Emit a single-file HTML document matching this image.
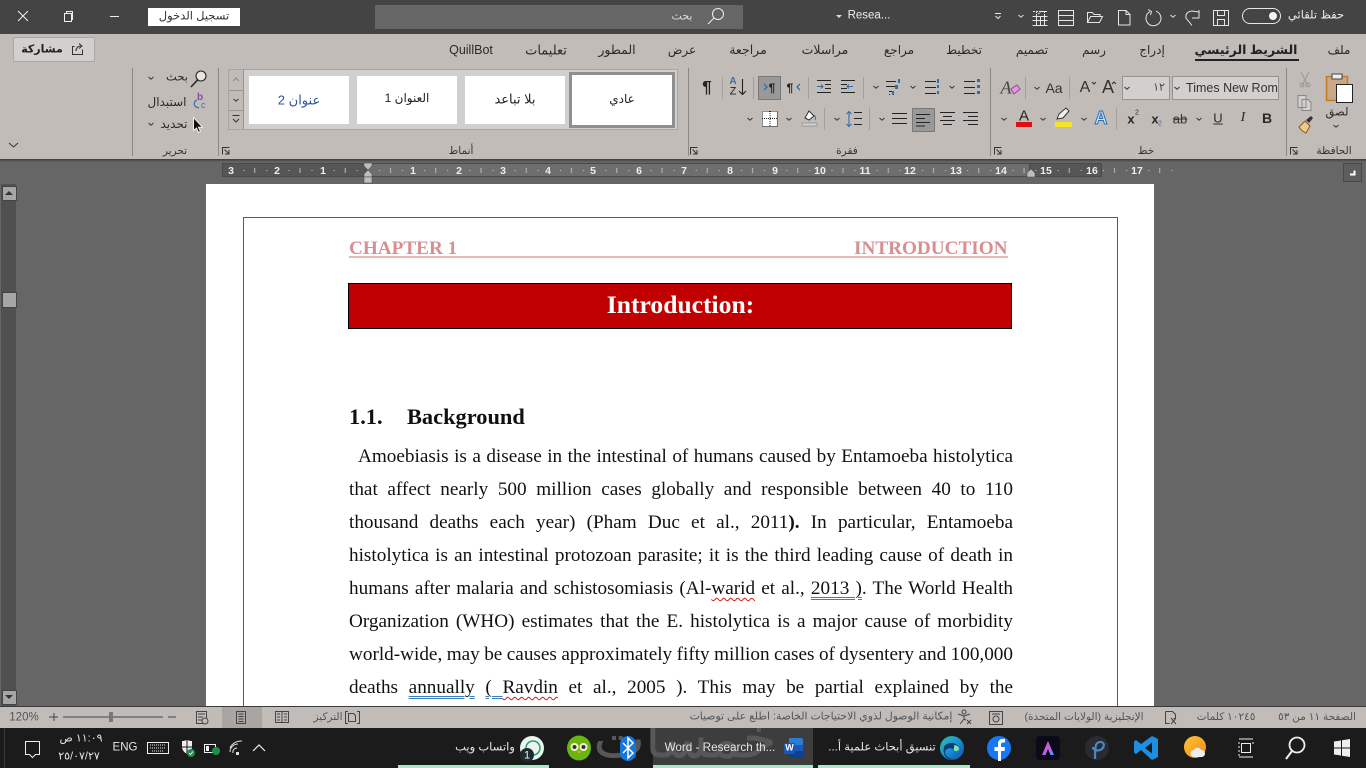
<!DOCTYPE html>
<html lang="ar"><head><meta charset="utf-8"><title>Word</title>
<style>
html,body{margin:0;padding:0;width:1366px;height:768px;overflow:hidden;background:#666}
body{position:relative;font-family:"Liberation Sans","DejaVu Sans",sans-serif;color:#222}
div,span.a{position:absolute}
.t{position:absolute;white-space:nowrap;transform:translate(-50%,-50%);line-height:1;font-size:11.5px;color:#2a2a2a}
.w{color:#eee}
.s{color:#555;font-size:10.5px}
.g{font-size:10.5px;color:#333}
.tb{font-size:11.5px;color:#e6e6e6}
.p{left:349px;width:664px;height:33px;line-height:33px;font:19.2px/33px "Liberation Serif",serif;color:#111;text-align:justify;text-align-last:justify;white-space:nowrap}
.b{text-decoration:underline double #3a7fc0 1px;text-underline-offset:3px}
.r{text-decoration:underline wavy #d01818 1px;text-underline-offset:3px}
.sep{width:1px;background:#a3a09c}
.gs{width:1px;background:#8c8985}
.st{background:#fff;top:76px;width:100px;height:48px}
svg{position:absolute;left:0;top:0}
</style></head><body>

<div style="left:0;top:0;width:1366px;height:34px;background:#444"></div>
<div style="left:0;top:34px;width:1366px;height:125px;background:#c1bcb8"></div>
<div style="left:0;top:159px;width:1366px;height:3px;background:linear-gradient(#3c3c3c,#666)"></div>

<div style="left:148px;top:8px;width:92px;height:18px;background:#fff"></div>
<span class="t" dir="rtl" style="left:194px;top:17px;color:#333;font-size:11.5px">تسجيل الدخول</span>
<div style="left:375px;top:5px;width:368px;height:24px;background:#666"></div>
<span class="t w" dir="rtl" style="left:682px;top:17px;font-size:11px;color:#ddd">بحث</span>
<span class="t w" style="left:869px;top:16px;font-size:11.5px;color:#eee">Resea...</span>
<span class="t w" dir="rtl" style="left:1316px;top:16px;font-size:11.5px">حفظ تلقائي</span>

<span class="t" dir="rtl" style="left:1339px;top:50px;font-size:12px">ملف</span>
<span class="t" dir="rtl" style="left:1246px;top:50px;font-size:12.5px;font-weight:bold;color:#222">الشريط الرئيسي</span>
<div style="left:1195px;top:59px;width:104px;height:2px;background:#222"></div>
<span class="t" dir="rtl" style="left:1152px;top:50px;font-size:12px">إدراج</span>
<span class="t" dir="rtl" style="left:1094px;top:50px;font-size:12px">رسم</span>
<span class="t" dir="rtl" style="left:1032px;top:50px;font-size:12px">تصميم</span>
<span class="t" dir="rtl" style="left:964px;top:50px;font-size:12px">تخطيط</span>
<span class="t" dir="rtl" style="left:899px;top:50px;font-size:12px">مراجع</span>
<span class="t" dir="rtl" style="left:825px;top:50px;font-size:12.5px">مراسلات</span>
<span class="t" dir="rtl" style="left:748px;top:50px;font-size:12.5px">مراجعة</span>
<span class="t" dir="rtl" style="left:682px;top:50px;font-size:12px">عرض</span>
<span class="t" dir="rtl" style="left:617px;top:50px;font-size:12.5px">المطور</span>
<span class="t" dir="rtl" style="left:546px;top:50px;font-size:13px">تعليمات</span>
<span class="t" style="left:471px;top:50px;font-size:12.5px">QuillBot</span>

<div style="left:13px;top:37px;width:80px;height:23px;background:#d3cfcc;border:1px solid #aaa6a2;border-radius:2px"></div>
<span class="t" dir="rtl" style="left:42px;top:50px;font-size:11px;font-weight:bold;color:#222">مشاركة</span>

<div class="gs" style="left:132px;top:68px;height:88px"></div>
<div class="gs" style="left:218px;top:68px;height:88px"></div>
<div class="gs" style="left:688px;top:68px;height:88px"></div>
<div class="gs" style="left:990px;top:68px;height:88px"></div>
<div class="gs" style="left:1286px;top:68px;height:88px"></div>

<span class="t g" dir="rtl" style="left:175px;top:151px">تحرير</span>
<span class="t g" dir="rtl" style="left:461px;top:151px">أنماط</span>
<span class="t g" dir="rtl" style="left:847px;top:151px">فقرة</span>
<span class="t g" dir="rtl" style="left:1146px;top:151px">خط</span>
<span class="t g" dir="rtl" style="left:1334px;top:151px">الحافظة</span>

<span class="t" dir="rtl" style="left:177px;top:78px;font-size:11.5px">بحث</span>
<span class="t" dir="rtl" style="left:167px;top:102px;font-size:12px">استبدال</span>
<span class="t" dir="rtl" style="left:174px;top:124px;font-size:12px">تحديد</span>

<div style="left:229px;top:70px;width:448px;height:59px;background:#d0cfce;outline:1px solid #a8a5a2"></div>
<div style="left:229px;top:70px;width:14px;height:59px;background:#c1bcb8"></div>
<div style="left:243px;top:70px;width:1px;height:59px;background:#98958f"></div>
<div style="left:229px;top:90px;width:14px;height:1px;background:#98958f"></div>
<div style="left:229px;top:110px;width:14px;height:1px;background:#98958f"></div>
<div class="st" style="left:249px"></div>
<div class="st" style="left:357px"></div>
<div class="st" style="left:465px"></div>
<div style="left:569px;top:72px;width:100px;height:50px;background:#fff;border:3px solid #8f8f8f"></div>
<span class="t" dir="rtl" style="left:299px;top:100px;font-size:13px;color:#2f5496">عنوان 2</span>
<span class="t" dir="rtl" style="left:407px;top:98px;font-size:12px;color:#222">العنوان 1</span>
<span class="t" dir="rtl" style="left:515px;top:99px;font-size:13px;color:#222">بلا تباعد</span>
<span class="t" dir="rtl" style="left:622px;top:99px;font-size:12px;color:#222">عادي</span>

<div style="left:758px;top:76px;width:21px;height:22px;background:#999;border:1px solid #777"></div>
<div style="left:912px;top:108px;width:21px;height:22px;background:#999;border:1px solid #777"></div>
<div class="sep" style="left:722px;top:77px;height:22px"></div>
<div class="sep" style="left:753px;top:77px;height:22px"></div>
<div class="sep" style="left:808px;top:77px;height:22px"></div>
<div class="sep" style="left:863px;top:77px;height:22px"></div>
<div class="sep" style="left:824px;top:108px;height:22px"></div>
<div class="sep" style="left:869px;top:108px;height:22px"></div>
<div class="sep" style="left:1025px;top:77px;height:22px"></div>
<div class="sep" style="left:1069px;top:77px;height:22px"></div>
<div class="sep" style="left:1116px;top:108px;height:22px"></div>

<span class="t" style="left:707px;top:87px;font-size:17px;font-weight:bold;color:#222">¶</span>
<span class="t" style="left:772px;top:88px;font-size:12px;font-weight:bold;color:#222">¶</span>
<span class="t" style="left:790px;top:88px;font-size:12px;font-weight:bold;color:#222">¶</span>

<div style="left:1172px;top:76px;width:105px;height:22px;background:#d2cfcc;border:1px solid #96938f"></div>
<div style="left:1122px;top:76px;width:46px;height:22px;background:#d2cfcc;border:1px solid #96938f"></div>
<span class="t" style="left:1232px;top:88px;font-size:12.5px;color:#333">Times New Rom</span>
<span class="t" style="left:1159px;top:88px;font-size:11px;color:#444">١٢</span>

<span class="t" style="left:1267px;top:118px;font-size:14px;font-weight:bold">B</span>
<span class="t" style="left:1243px;top:118px;font:italic 14px 'Liberation Serif',serif">I</span>
<span class="t" style="left:1218px;top:118px;font-size:13px;text-decoration:underline">U</span>
<span class="t" style="left:1180px;top:119px;font-size:13px;color:#333;text-decoration:line-through">ab</span>
<span class="t" style="left:1155px;top:119px;font-size:13px;font-weight:bold">x</span>
<span class="t" style="left:1160px;top:124px;font-size:7px;color:#2f6fb0">2</span>
<span class="t" style="left:1131px;top:119px;font-size:13px;font-weight:bold">x</span>
<span class="t" style="left:1137px;top:113px;font-size:7px">2</span>
<span class="t" style="left:1054px;top:88px;font-size:14px;color:#333">Aa</span>
<span class="t" style="left:1085px;top:88px;font-size:16px;color:#333">A</span>
<span class="t" style="left:1108px;top:87px;font-size:18px;color:#333">A</span>
<span class="t" style="left:1006px;top:88px;font:italic 18px 'Liberation Serif',serif;color:#444">A</span>
<span class="t" style="left:1024px;top:116px;font-size:15px;color:#222">A</span>
<span class="t" style="left:1101px;top:118px;font-size:18px;font-weight:bold;color:#cfe2f5;-webkit-text-stroke:1px #2f6fb0">A</span>
<span class="t" dir="rtl" style="left:1337px;top:113px;font-size:11.5px">لصق</span>
<span class="t" style="left:733px;top:82px;font-size:10px;font-weight:bold;color:#3e6fa8">A</span>
<span class="t" style="left:733px;top:92px;font-size:11px;color:#222">Z</span>

<!-- ruler -->
<div style="left:223px;top:164px;width:145px;height:12px;background:#565656;outline:1px solid #4a4a4a"></div>
<div style="left:368px;top:164px;width:662px;height:12px;background:#6e6e6e;outline:1px solid #4a4a4a"></div>
<div style="left:1030px;top:164px;width:71px;height:12px;background:#565656;outline:1px solid #4a4a4a"></div>

<!-- page -->
<div style="left:206px;top:184px;width:948px;height:522px;background:#fff;overflow:hidden"></div>
<div style="left:243px;top:217px;width:873px;height:489px;border:1px solid #b8303f;border-bottom:0"></div>
<div style="left:349px;top:238px;font:bold 19.2px/22px 'Liberation Serif',serif;color:#d88f8f;white-space:nowrap">CHAPTER 1</div>
<div style="left:854px;top:238px;font:bold 19.2px/22px 'Liberation Serif',serif;color:#d88f8f;white-space:nowrap">INTRODUCTION</div>
<div style="left:349px;top:256px;width:659px;height:2px;background:#ebb9b9"></div>
<div style="left:348px;top:283px;width:662px;height:44px;background:#c00000;border:1px solid #000"></div>
<div style="left:349px;top:290px;width:663px;text-align:center;font:bold 25.6px/30px 'Liberation Serif',serif;color:#fff">Introduction:</div>
<div style="left:349px;top:403px;font:bold 22.4px/28px 'Liberation Serif',serif;color:#111;white-space:nowrap">1.1.</div>
<div style="left:407px;top:403px;font:bold 22.4px/28px 'Liberation Serif',serif;color:#111;white-space:nowrap">Background</div>

<div class="p" style="top:440px;left:358px;width:655px">Amoebiasis is a disease in the intestinal of humans caused by Entamoeba histolytica</div>
<div class="p" style="top:473px">that affect nearly 500 million cases globally and responsible between 40 to 110</div>
<div class="p" style="top:506px">thousand deaths each year) (Pham Duc et al., 2011<b>).</b> In particular, Entamoeba</div>
<div class="p" style="top:539px">histolytica is an intestinal protozoan parasite; it is the third leading cause of death in</div>
<div class="p" style="top:572px">humans after malaria and schistosomiasis (Al-<span class="r">warid</span> et al., <span class="b">2013 )</span>. The World Health</div>
<div class="p" style="top:605px">Organization (WHO) estimates that the E. histolytica is a major cause of morbidity</div>
<div class="p" style="top:638px;word-spacing:-0.5px">world-wide, may be causes approximately fifty million cases of dysentery and 100,000</div>
<div class="p" style="top:671px">deaths <span class="b">annually</span> <span class="b">( </span><span class="r">Ravdin</span> et al., 2005 ). This may be partial explained by the</div>

<!-- scrollbar -->
<div style="left:1px;top:184px;width:15px;height:522px;background:#505050"></div>
<div style="left:2px;top:186px;width:13px;height:13px;background:#a6a6a6;border:1px solid #444"></div>
<div style="left:2px;top:292px;width:13px;height:14px;background:#a6a6a6;border:1px solid #444"></div>
<div style="left:2px;top:690px;width:13px;height:13px;background:#a6a6a6;border:1px solid #444"></div>

<!-- status -->
<div style="left:0;top:706px;width:1366px;height:1px;background:#3a3a3a"></div>
<div style="left:0;top:707px;width:1366px;height:21px;background:#c1bcb8"></div>
<div style="left:222px;top:707px;width:40px;height:21px;background:#a9a5a1"></div>
<span class="t s" style="left:24px;top:718px;font-size:11.5px">120%</span>
<span class="t s" dir="rtl" style="left:1317px;top:717px">الصفحة ١١ من ٥٣</span>
<span class="t s" dir="rtl" style="left:1226px;top:717px">١٠٢٤٥ كلمات</span>
<span class="t s" dir="rtl" style="left:1084px;top:717px">الإنجليزية (الولايات المتحدة)</span>
<span class="t s" dir="rtl" style="left:821px;top:717px;font-size:10.8px">إمكانية الوصول لذوي الاحتياجات الخاصة: اطلع على توصيات</span>
<span class="t s" dir="rtl" style="left:328px;top:717px">التركيز</span>

<!-- taskbar -->
<div style="left:0;top:728px;width:1366px;height:40px;background:#1b1b1b"></div>
<div style="left:653px;top:728px;width:160px;height:40px;background:#3d3d3d"></div>
<div style="left:590px;top:728px;width:190px;height:40px;overflow:hidden"><span class="t" dir="rtl" style="left:95px;top:11px;font-size:55px;color:#575757">خمسات</span></div>
<div style="left:398px;top:765px;width:151px;height:3px;background:#a6e8c8"></div>
<div style="left:653px;top:765px;width:160px;height:3px;background:#a6e8c8"></div>
<div style="left:818px;top:765px;width:152px;height:3px;background:#a6e8c8"></div>
<span class="t tb" dir="rtl" style="left:882px;top:748px">تنسيق أبحاث علمية أ...</span>
<span class="t tb" style="left:720px;top:748px;font-size:11.7px">Word - Research th...</span>
<span class="t tb" dir="rtl" style="left:485px;top:748px">واتساب ويب</span>
<span class="t tb" style="left:125px;top:748px;font-size:11.5px">ENG</span>
<span class="t tb" dir="rtl" style="left:81px;top:739px;font-size:11px">١١:٠٩ ص</span>
<span class="t tb" style="left:79px;top:757px;font-size:11px;direction:ltr;unicode-bidi:bidi-override">٢٥/٠٧/٢٧</span>
<span class="t" style="left:789.5px;top:748px;font-size:9px;font-weight:bold;color:#fff;z-index:3">W</span>
<span class="t tb" style="left:527px;top:756px;font-size:11px;color:#eee;z-index:3">1</span>

<svg width="1366" height="768" viewBox="0 0 1366 768" fill="none">
<defs>
<path id="c" d="M-2.5-1 0 1.2 2.5-1" stroke="#333" stroke-width="1"/>
<path id="cw" d="M-2.5-1 0 1.2 2.5-1" stroke="#ddd" stroke-width="1"/>
<pattern id="rt" x="368" y="164" width="45.25" height="12" patternUnits="userSpaceOnUse">
<rect x="11" y="6" width="1" height="1" fill="#ccc"/><rect x="22" y="4" width="1" height="5" fill="#bbb"/><rect x="34" y="6" width="1" height="1" fill="#ccc"/>
</pattern>
<linearGradient id="ed" x1="0" y1="0" x2="1" y2="1"><stop offset="0" stop-color="#35c1a0"/><stop offset=".5" stop-color="#1a8fd8"/><stop offset="1" stop-color="#0c4fa8"/></linearGradient>
<linearGradient id="wx" x1="0" y1="0" x2="1" y2="1"><stop offset="0" stop-color="#ffc531"/><stop offset="1" stop-color="#f08a1d"/></linearGradient>
<linearGradient id="ad" x1="0" y1="0" x2="1" y2="1"><stop offset="0" stop-color="#ff5b5b"/><stop offset=".5" stop-color="#c55be8"/><stop offset="1" stop-color="#4d9bff"/></linearGradient>
</defs>

<!-- window controls -->
<g stroke="#eee" stroke-width="1">
<path d="M18 11 28 21M28 11 18 21"/>
<path d="M64.500 13.500h7v8h-7zM66.500 13.500v-2h6v8h-1"/>
<path d="M110 16.500h9"/>
<circle cx="718" cy="14" r="5.500"/><path d="M714 18 708 24"/>
</g>
<path d="M836 15h6l-3 3z" fill="#ddd"/>

<!-- QAT -->
<g stroke="#e6e6e6" stroke-width="1">
<path d="M995 13.500h6M995.500 16l2.500 2.500 2.500-2.500"/>
<path d="M1032.500 16.500h15M1032.500 20.500h15M1032.500 25.500h15M1036.500 16.500v9M1040.500 16.500v9M1044.500 16.500v9"/>
<path d="M1033 11.500h14M1036.500 11v5M1044.500 11v5M1038 14l4-3" stroke-dasharray="2 1"/>
<path d="M1058.500 10.500h15v15h-15zM1058.500 15.500h15M1058.500 20.500h15"/>
<path d="M1087.500 22.500v-10h5l1.500 2h6v2M1087.500 22.500h12l3-6h-12z"/>
<path d="M1118.500 10.500h7.500l4 4v10.500h-11.500zM1126 10.500v4h4"/>
<path d="M1150 11.600A7.500 7.500 0 1 0 1156 11.200M1148 9.500l3.500 2-1 3.500"/>
<path d="M1192 25.500 1186 18Q1185 12 1192 11L1199 12M1199 10V18H1192"/>
<path d="M1213.500 10.500h15v15h-15zM1217.500 10.500v5h7v-5M1217.500 25.500v-6h7v6"/>
<rect x="1242.500" y="8.500" width="38" height="15" rx="7.500"/>
</g>
<use href="#cw" x="1021" y="16"/><use href="#cw" x="1173" y="16"/>
<circle cx="1273" cy="16" r="4" fill="#f4f4f4"/>

<!-- share icon -->
<g stroke="#333" stroke-width="1"><path d="M74.500 46.500h-2v8h10v-5M76 51c0-3 2-5 5-5M79 43.500l3 2.500-3 2.500"/></g>

<!-- editing group -->
<g stroke="#222" stroke-width="1.100">
<circle cx="201" cy="76" r="5" fill="#e8e6e4"/><path d="M197.500 80 191 87" stroke-width="1.500"/>
</g>
<use href="#c" x="151" y="78"/><use href="#c" x="151" y="124"/>
<text x="197" y="100" font-family="Liberation Sans" font-size="10" font-weight="bold" fill="#8a4aa8">b</text>
<text x="201" y="108" font-family="Liberation Sans" font-size="9" fill="#3e6fa8">c</text>
<path d="M197 100a4 4 0 0 0-1 7l3 1" stroke="#3e6fa8" stroke-width="1.200"/>
<path d="M193.500 117.500v13l3-2.500 2 4.500 2-1-2-4.300h4z" fill="#111" stroke="#eee" stroke-width="1"/>
<path d="M9 143l4.500 4 4.500-4" stroke="#333"/>

<!-- launchers -->
<g stroke="#333" stroke-width="1">
<path d="M222.500 154.500v-7h7M224.500 149.500l4 4M229 150v4h-4"/>
<path d="M690.500 154.500v-7h7M692.500 149.500l4 4M697 150v4h-4"/>
<path d="M994.500 154.500v-7h7M996.500 149.500l4 4M1001 150v4h-4"/>
<path d="M1290.500 154.500v-7h7M1292.500 149.500l4 4M1297 150v4h-4"/>
</g>

<!-- gallery scroll -->
<path d="M233 81l3-3 3 3" stroke="#888"/>
<use href="#c" x="236" y="100"/>
<path d="M232.500 115.500h7M233 119l3 3 3-3" stroke="#333"/>

<!-- paragraph row 1 -->
<path d="M742.500 79v15M739 91l3.500 3.500 3.500-3.500" stroke="#222" stroke-width="1.100"/>
<path d="M764 84l3 3-3 3" stroke="#2f6fb0" stroke-width="1.300"/>
<path d="M800 84l-3 3 3 3" stroke="#2f6fb0" stroke-width="1.300"/>
<g stroke="#222" stroke-width="1">
<path d="M817 80.500h14M825 84.500h6M825 88.500h6M817 92.500h14"/>
<path d="M841 80.500h14M841 84.500h6M841 88.500h6M841 92.500h14"/>
<path d="M886 81.500h10M886 86.500h10M889 91.500h5M889 94.500h1"/>
<path d="M925 81.500h11M925 87.500h11M925 93.500h11"/>
<path d="M964 81.500h11M964 87.500h11M964 93.500h11"/>
<path d="M892 113.500h15M892 118.500h15M892 123.500h15"/>
<path d="M916 114.500h14M916 118.500h9M916 122.500h14M916 126h9"/>
<path d="M940 112.500h15M943 116.500h9M940 120.500h15M943 124.500h9"/>
<path d="M963 112.500h15M968 116.500h10M963 120.500h15M968 124.500h10"/>
<path d="M854 112.500h8M854 118.500h8M854 124.500h8"/>
</g>
<path d="M817 86.500h6m-2-2 2 2-2 2M853 86.500h-6m2-2-2 2 2 2" stroke="#2f6fb0"/>
<path d="M849 112v14M846.500 114l2.500-2.500 2.500 2.500M846.500 124l2.500 2.500 2.500-2.500" stroke="#2f6fb0" stroke-width="1.100"/>
<g fill="#2f6fb0"><rect x="977" y="79" width="3" height="3"/><rect x="977" y="85" width="3" height="3"/><rect x="977" y="91" width="3" height="3"/>
<rect x="898" y="79" width="2" height="4"/><rect x="937" y="79" width="2" height="4"/><rect x="937" y="85" width="2" height="3"/><rect x="937" y="91" width="2" height="3"/><rect x="895" y="85" width="3" height="4"/><rect x="892" y="91" width="2" height="4"/></g>
<use href="#c" x="876" y="87"/><use href="#c" x="913" y="87"/><use href="#c" x="952" y="87"/>
<use href="#c" x="750" y="119"/><use href="#c" x="789" y="119"/><use href="#c" x="837" y="119"/><use href="#c" x="882" y="119"/>
<rect x="762" y="111" width="15" height="15" fill="#fff"/>
<path d="M762.500 111.500h15v15h-15zM770 111v15M762 118.500h15" stroke="#222" stroke-dasharray="1 1"/>
<path d="M805 118l4-7 5 5-5 4z" fill="#fff" stroke="#333"/><path d="M814 115c2 2 2 4 1 5" stroke="#2f6fb0"/>
<rect x="802" y="123" width="15" height="3" fill="#d8d4d0" stroke="#999"/>

<!-- font -->
<use href="#c" x="1037" y="88"/><use href="#c" x="1127" y="88"/><use href="#c" x="1177" y="88"/>
<use href="#c" x="1199" y="119"/><use href="#c" x="1084" y="119"/><use href="#c" x="1043" y="119"/><use href="#c" x="1004" y="119"/>
<path d="M1092 82l2 2 2-2M1112 84l2-2 2 2" stroke="#333"/>
<path d="M1011 89l6-4 3 4-6 5z" fill="#e89ad0" stroke="#8a4aa8"/>
<rect x="1016" y="122" width="16" height="5" fill="#e01010"/>
<rect x="1055" y="122" width="17" height="5" fill="#f4e623"/>
<path d="M1057 119l2-5 7-6 3 3-6 7z" fill="#eee" stroke="#333"/>

<!-- clipboard -->
<path d="M1301 72l7 14M1309 72l-7 14" stroke="#999" stroke-width="1"/><circle cx="1302" cy="85" r="2" stroke="#999"/><circle cx="1308" cy="85" r="2" stroke="#999"/>
<path d="M1298 95.500h8v12h-8zM1302 99.500h6l3 3v8h-9z" stroke="#888" fill="#d2cfcc"/>
<path d="M1299 127l6-6 5 5-4 7c-3-1-5-3-7-6z" fill="#f0c98a" stroke="#8a5a20"/><path d="M1306 120l5-4 2 2-4 5" fill="#333"/>
<rect x="1326.500" y="76.500" width="21" height="24" fill="#c7a888" stroke="#c77a24" stroke-width="1.500"/>
<rect x="1332" y="74" width="10" height="5" fill="#eee" stroke="#444"/>
<rect x="1336.500" y="84.500" width="16" height="18" fill="#fff" stroke="#222"/>
<use href="#c" x="1336" y="126"/>

<!-- ruler -->
<rect x="223" y="164" width="960" height="12" fill="url(#rt)"/>
<g font-family="Liberation Sans" font-size="10.500" font-weight="bold" fill="#eee" text-anchor="middle">
<text x="231" y="174">3</text><text x="277" y="174">2</text><text x="323" y="174">1</text>
<text x="413" y="174">1</text><text x="459" y="174">2</text><text x="503" y="174">3</text><text x="548" y="174">4</text><text x="593" y="174">5</text><text x="639" y="174">6</text><text x="684" y="174">7</text><text x="730" y="174">8</text><text x="775" y="174">9</text><text x="820" y="174">10</text><text x="865" y="174">11</text><text x="910" y="174">12</text><text x="956" y="174">13</text><text x="1001" y="174">14</text><text x="1046" y="174">15</text><text x="1092" y="174">16</text><text x="1137" y="174">17</text>
</g>
<path d="M364 163h8v3l-4 4-4-4zM364 177v-3l4-4 4 4v3z" fill="#bdbdbd" stroke="#444" stroke-width=".5"/>
<rect x="364" y="177" width="8" height="6" fill="#bdbdbd" stroke="#444" stroke-width=".5"/>
<path d="M1027 177v-4l4-4 4 4v4z" fill="#bdbdbd" stroke="#444" stroke-width=".5"/>
<rect x="1343.500" y="163.500" width="18" height="18" fill="#5e5e5e" stroke="#4a4a4a"/>
<path d="M1350 174.500h4.500v-4" stroke="#fff" stroke-width="2"/>

<!-- scroll arrows -->
<path d="M5 195l4-4 4 4z" fill="#333"/><path d="M5 695l4 4 4-4z" fill="#333"/>

<!-- status icons -->
<g stroke="#444" stroke-width="1">
<path d="M49 717h9M54 713v8M63 717h100M168 717h8"/>
<rect x="109" y="712" width="4" height="10" fill="#777" stroke="none"/>
<path d="M196.500 711.500h10v12h-10zM198 714h7M198 717h5M198 720h4"/><circle cx="205" cy="721" r="3" fill="#c1bcb8"/>
<path d="M236.500 711.500h9v12h-9zM238.500 714h5M238.500 716.500h5M238.500 719h5M238.500 721.500h5"/>
<path d="M275.500 711.500h13v11h-13zM282 711.500v11M277 714h3M277 717h3M277 720h3M284 714h3M284 717h3M284 720h3"/>
<path d="M348 711.500h-2.500v12h2.500M357 711.500h2.500v12h-2.500M348.500 713.500h5l2 2v6h-7z"/>
<circle cx="964" cy="712" r="2"/><path d="M958 714l6 2 6-2M964 716v3l-4 5M964 719l2 1M967 720l4 4M971 720l-4 4"/>
<path d="M989.500 711.500h13v13h-13zM992 714h8"/><circle cx="996" cy="719" r="3"/>
<path d="M1165.500 711.500h7l3 3v4h-2M1165.500 711.500v12h4M1171 718l5 6M1176 718l-5 6"/>
</g>

<!-- taskbar left -->
<path d="M4.500 728v40" stroke="#3a3a3a"/>
<path d="M25.500 741.500h14v13h-4l-3 3-3-3h-4z" stroke="#eee"/>
<rect x="147.500" y="742.500" width="21" height="11" stroke="#eee"/>
<path d="M150 745h16M150 748h16M152 751h12" stroke="#eee" stroke-dasharray="1 1"/>
<path d="M182 741c3 0 4-1 5-1s2 1 5 1v6c0 3-2 5-5 7-3-2-5-4-5-7z" fill="#eee"/><path d="M187 740v15M182 747h10" stroke="#1b1b1b"/>
<circle cx="191" cy="753" r="4" fill="#1d8f4a"/><path d="M189 753l1.500 1.500 2.500-3" stroke="#fff" stroke-width=".8"/>
<rect x="204.500" y="744.500" width="11" height="8" stroke="#eee"/><rect x="206" y="746" width="3" height="5" fill="#eee"/>
<circle cx="216" cy="751" r="4" fill="#1d8f4a"/>
<path d="M230 752a8 8 0 0 1 8-8M230 748a12 12 0 0 1 12-7M233 753a4 4 0 0 1 4-5" stroke="#ddd"/><rect x="236" y="752" width="3" height="3" fill="#ddd"/>
<path d="M253 751l6-6 6 6" stroke="#eee" stroke-width="1.200"/>

<!-- whatsapp-like -->
<circle cx="532" cy="748" r="12" fill="#eaf5ee"/><circle cx="533" cy="748" r="7" stroke="#2a9d6a" stroke-width="1.500"/>
<circle cx="527" cy="755" r="7" fill="#1e2a30"/>
<!-- duolingo -->
<ellipse cx="579" cy="748" rx="12" ry="12.500" fill="#6ab510"/>
<circle cx="574.500" cy="747" r="4" fill="#f4f0d0"/><circle cx="583.500" cy="747" r="4" fill="#f4f0d0"/><circle cx="574.500" cy="747" r="2" fill="#333"/><circle cx="583.500" cy="747" r="2" fill="#333"/><path d="M577 751h4l-2 3z" fill="#f0a020"/>
<!-- bluetooth -->
<rect x="620" y="736" width="16" height="25" rx="8" fill="#1477e0"/><path d="M623 743l10 10-5 5v-20l5 5-10 10" stroke="#fff" stroke-width="1.500"/>
<!-- word -->
<path d="M789 738h12a2 2 0 0 1 2 2v16a2 2 0 0 1-2 2h-12z" fill="#2b7cd3"/><path d="M789 745h14v6h-14z" fill="#185abd"/><path d="M789 751h14v5a2 2 0 0 1-2 2h-12z" fill="#103f91"/>
<rect x="784" y="743" width="11" height="11" fill="#1557b8"/>
<!-- edge -->
<circle cx="952" cy="748" r="12" fill="url(#ed)"/><path d="M944 747c2-5 13-6 15 1 0 3-4 3-5 2-3-3-8-2-9 2 0 4 4 7 10 7-7 2-13-3-11-12z" fill="#0b3d7a"/><path d="M954 745c3 0 5 2 5 4s-4 3-5 1 1-3 0-5z" fill="#7fe6a0"/>
<!-- facebook -->
<circle cx="999" cy="748" r="12" fill="#1877f2"/><path d="M1001 761v-10h3.500l.5-4h-4v-2.500c0-1.200.5-2 2-2h2v-3.500c-4-.7-7 .5-7 5v3h-3.500v4h3.500v10z" fill="#fff"/>
<!-- adobe -->
<rect x="1036" y="736" width="24" height="24" rx="4" fill="#0a0a18"/><path d="M1048 741l6 14h-3.500l-2.500-6-2.500 6h-3.500z" fill="url(#ad)"/>
<!-- p -->
<circle cx="1097" cy="748" r="12" fill="#2a2a30"/><path d="M1095 759c0-6 0-10 1-14 1-3 5-4 7-2s0 6-3 7c-3 1-7 0-7-3" stroke="#4a86c8" stroke-width="2.200"/>
<!-- vscode -->
<path d="M1152 736l6 3v18l-6 3-11-10-5 4-2-1.500v-11l2-1.500 5 4zm0 6.500-7 5.500 7 5.500z" fill="#1d8fe0"/>
<!-- weather -->
<circle cx="1195" cy="747" r="11" fill="url(#wx)"/><path d="M1194 757a3.500 3.500 0 0 1 0-7c1-3 6-3 7 0a3.500 3.500 0 0 1 1 7z" fill="#eee"/>
<!-- task view -->
<path d="M1239 739h14M1239 757h14M1241.500 743.500h9v9h-9z" stroke="#eee"/><path d="M1239 742v2M1239 746v2M1239 750v2M1239 754v2M1253 742v2" stroke="#eee"/>
<!-- search -->
<circle cx="1297" cy="745" r="7.500" stroke="#eee" stroke-width="1.800"/><path d="M1292 751l-6 8" stroke="#eee" stroke-width="2"/>
<!-- windows -->
<path d="M1334 741.500l7-1v7h-7zM1342 740.300l8-1.300v8.500h-8zM1334 748.500h7v7l-7-1zM1342 748.500h8v8.500l-8-1.300z" fill="#eee"/>
</svg>
</body></html>
